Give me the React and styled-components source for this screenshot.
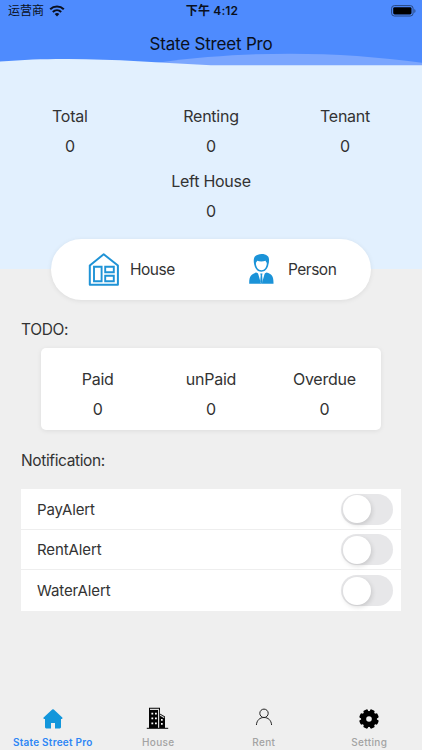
import React from 'react'
import { useState } from 'react'
import styled, { createGlobalStyle } from 'styled-components'

const GlobalStyle = createGlobalStyle`
  * {
    box-sizing: border-box;
  }
  body {
    margin: 0;
    background-color: #efefef;
    font-family: Inter, 'Noto Sans CJK SC', sans-serif;
    color: #333;
  }
`

// Page

const Page = styled.div`
  display: flex;
  flex-direction: column;
  width: 422px;
  height: 750px;
  overflow: hidden;
  background-color: #efefef;
`

// Header

const Header = styled.header`
  display: flex;
  flex-direction: column;
  height: 66px;
  background-color: #4e8bfe;
  color: #0a1020;
  position: relative;
`
const StatusBar = styled.div`
  display: grid;
  grid-template-columns: 1fr auto 1fr;
  align-items: center;
  height: 22px;
  padding: 0 6px 0 8px;
  font-size: 12px;
  line-height: 22px;
`
const Carrier = styled.div`
  display: flex;
  align-items: center;
  gap: 5px;
`
const Time = styled.div`
  font-weight: 600;
  letter-spacing: 0.15px;
  white-space: nowrap;
`
const BatteryIcon = styled.svg`
  justify-self: end;
`
const Title = styled.h1`
  margin: 0;
  font-size: 17px;
  font-weight: 400;
  letter-spacing: -0.2px;
  line-height: 45px;
  text-align: center;
  z-index: 1;
`
const Wave = styled.svg`
  position: absolute;
  left: 0;
  bottom: 0;
`

// Overview

const Overview = styled.section`
  height: 202.5px;
  padding: 35px 52px 0;
  background-color: #e2f0fe;
`
const StatRow = styled.div`
  display: grid;
  grid-template-columns: repeat(3, 1fr);
  justify-items: center;
  & > :first-child {
    justify-self: start;
  }
  & > :last-child {
    justify-self: end;
  }
`
const LeftRow = styled.div`
  display: flex;
  justify-content: center;
  margin-top: 5px;
`
const StatBox = styled.div`
  display: flex;
  flex-direction: column;
  align-items: center;
  font-size: 16px;
  letter-spacing: -0.25px;
  line-height: 30px;
`

const Pill = styled.div`
  display: flex;
  flex-shrink: 0;
  width: 320px;
  height: 61px;
  margin: -30px auto 0;
  padding: 1px 0 0 35px;
  background-color: white;
  border-radius: 31px;
  box-shadow: 0 1px 5px rgba(0, 0, 0, 0.08);
`
const PillItem = styled.div`
  display: flex;
  align-items: center;
  flex-shrink: 0;
  gap: 9px;
  width: 158px;
  font-size: 15.5px;
  letter-spacing: -0.5px;
`

// Todo

const SectionTitle = styled.h2`
  margin: ${(props) => props.$top}px 0 0 21px;
  font-size: 15.5px;
  font-weight: 400;
  letter-spacing: -0.38px;
  line-height: 20px;
`
const TodoCard = styled.div`
  display: grid;
  grid-template-columns: repeat(3, 1fr);
  flex-shrink: 0;
  width: 340px;
  height: 82px;
  margin: 8.8px auto 0;
  padding-top: 16px;
  background-color: white;
  border-radius: 5px;
  box-shadow: 0 1px 5px rgba(0, 0, 0, 0.08);
`

// Notification

const AlertList = styled.div`
  width: 380px;
  margin: 18.4px auto 0;
  background-color: white;
`
const AlertRow = styled.div`
  display: flex;
  align-items: center;
  justify-content: space-between;
  height: 40.5px;
  padding: 1px 8px 0 16px;
  border-bottom: 1px solid #eee;
  font-size: 15px;
  letter-spacing: -0.1px;
  &:last-child {
    border-bottom: none;
  }
`
const Switch = styled.button`
  display: flex;
  align-items: center;
  justify-content: ${(props) => (props.$on ? 'flex-end' : 'flex-start')};
  width: 52px;
  height: 31px;
  padding: 0 1.5px;
  border: none;
  border-radius: 16px;
  background-color: ${(props) => (props.$on ? '#34c759' : '#e7e7e9')};
  cursor: pointer;
`
const Knob = styled.span`
  width: 28px;
  height: 28px;
  border-radius: 50%;
  background-color: white;
  box-shadow: 1px 2px 5px rgba(0, 0, 0, 0.14);
`

// Tabs

const TabBar = styled.nav`
  display: grid;
  grid-template-columns: repeat(4, 1fr);
  margin-top: auto;
  height: 48px;
`
const Tab = styled.div`
  display: flex;
  flex-direction: column;
  align-items: center;
  color: ${(props) => (props.$active ? '#2d86f5' : '#a3a3a3')};
  font-size: 10px;
  font-weight: ${(props) => (props.$active ? 600 : 500)};
  letter-spacing: ${(props) => (props.$active ? '0.25px' : '0.35px')};
  line-height: 14px;
  gap: 4px;
  padding-top: 5px;
`

const WifiIcon = () => (
  <svg width="16" height="12" viewBox="0 0 16 12" fill="none" stroke="#0a1020">
    <path d="M1.2 4.2C5 .6 11 .6 14.8 4.2" strokeWidth="2.1" />
    <path d="M3.8 7C6.2 4.8 9.8 4.8 12.2 7" strokeWidth="2" />
    <path d="M8 11.4 5.7 9c1.3-1.2 3.3-1.2 4.6 0z" fill="#0a1020" stroke="none" />
  </svg>
)

const HousePlanIcon = () => (
  <svg width="35" height="35" viewBox="0 0 35 35" fill="none" stroke="#1f93d6">
    <path d="M3.8 13.5 17.7 2.3 31.9 13.5V32.8H3.8z" strokeWidth="2" strokeLinejoin="round" />
    <path d="M8 14.8h7.6v14.4H8zM19.2 14.8h8.6v5.4h-8.6zM19.2 23.8h8.6v5.4h-8.6z" strokeWidth="1.9" />
  </svg>
)

const ManIcon = () => (
  <svg width="35" height="35" viewBox="0 0 35 35" fill="#1b93d8">
    <path d="M10.2 12.5C8.9 6.5 10.4 3.2 14 2.7c3-1.4 11-.9 11 4.6 0 1.8.1 3.4-.6 5.2-.8 4.6-3.5 7.2-7.1 7.2s-6.1-2.6-7.1-7.2z" />
    <path d="M11.9 10.8c.7-.5 1-1.2 1.2-2 2.5.8 6.1.8 8.5-.1.2.9.6 1.6 1.2 2.1 0 4.6-2.2 7.4-5.4 7.4s-5.5-2.8-5.5-7.4z" fill="white" />
    <path d="M12.2 20.6 17.4 23l5.2-2.4c4.8 1.4 6.9 3 6.9 10.2v1H5.2v-1c0-7.200 2.300-8.800 7-10.200z" />
    <path d="M13.8 20.4 16.9 31.2 17.9 31.2 21 20.4 17.4 21.4z" fill="white" />
    <path d="M16.3 21.5h2.2l-.4 1.9.5 6-1.2 2-1.2-2 .5-6z" />
  </svg>
)

const HomeIcon = () => (
  <svg width="24" height="24" viewBox="0 0 24 24" fill="#1296db">
    <path d="M11.2 2.5a1.2 1.2 0 0 1 1.6 0L21.3 10.6c.5.5.2 1.3-.5 1.3H20v8.2c0 .8-.5 1.3-1.2 1.3H14v-5.3h-4v5.3H5.2c-.7 0-1.200-.5-1.200-1.300v-8.200h-.9c-.7 0-1-.8-.5-1.300z" />
  </svg>
)

const BuildingIcon = () => (
  <svg width="24" height="24" viewBox="0 0 24 24">
    <path d="M3 .8h11V21H3zM13 6l6 3.5V21h-6z" fill="#050505" />
    <path d="M4 1.8h9V3H4zM12 3h1.2v18H12zM14 7.6l4.2 2.5v1.1L14 8.7z" fill="#ddd" />
    <path d="M5.4 5.8h1.8v1.8H5.4zM9 5.8h1.8v1.8H9zM5.4 10.5h1.8v1.8H5.4zM9 10.5h1.8v1.8H9zM5.4 15.5h1.8v1.8H5.4zM9 15.5h1.8v1.8H9zM15 12h1.7v1.7H15zM15 16h1.7v1.7H15z" fill="white" />
    <path d="M.8 21.3h21.4" stroke="#050505" strokeWidth="1" />
  </svg>
)

const PersonIcon = () => (
  <svg width="24" height="24" viewBox="0 0 24 24" fill="none" stroke="#222" strokeWidth="1">
    <circle cx="12" cy="6.3" r="4.2" />
    <path d="M4.4 18c.4-4.8 3.4-7.5 7.6-7.5s7.2 2.7 7.6 7.5" />
  </svg>
)

const GearIcon = () => (
  <svg width="24" height="24" viewBox="0 0 24 24">
    <circle cx="12" cy="12" r="8" />
    {[22.5, 67.5, 112.5, 157.5, 202.5, 247.5, 292.5, 337.5].map((angle) => (
      <rect key={angle} x="9.6" y="2.2" width="4.8" height="6" rx="1.2" transform={`rotate(${angle} 12 12)`} />
    ))}
    <circle cx="12" cy="12" r="2.8" fill="#efefef" />
  </svg>
)

const Stat = ({ label, value }) => (
  <StatBox>
    <span>{label}</span>
    <span>{value}</span>
  </StatBox>
)

const tabs = [
  { name: 'State Street Pro', icon: <HomeIcon /> },
  { name: 'House', icon: <BuildingIcon /> },
  { name: 'Rent', icon: <PersonIcon /> },
  { name: 'Setting', icon: <GearIcon /> },
]

export default function App() {
  const [alerts, setAlerts] = useState({
    PayAlert: false,
    RentAlert: false,
    WaterAlert: false,
  })

  const toggleHandler = (name) => {
    setAlerts({ ...alerts, [name]: !alerts[name] })
  }

  return (
    <Page>
      <GlobalStyle />
      <Header>
        <Wave width="422" height="14" viewBox="0 52 422 14">
          <path d="M155 63C205 56 250 53.7 290 53.7C335 53.7 380 57 422 62.7V66H155z" fill="#7ba6fe" />
          <path d="M0 61.6C25 59.5 45 58.8 68 58.9C115 59 160 62.5 211 65.3H422V66H0z" fill="#e2f0fe" />
        </Wave>
        <StatusBar>
          <Carrier>
            运营商 <WifiIcon />
          </Carrier>
          <Time>下午 4:12</Time>
          <BatteryIcon width="25" height="12" viewBox="0 0 25 12">
            <rect x=".6" y=".6" width="21.5" height="10.4" rx="2.8" fill="none" stroke="#28477f" />
            <rect x="2.2" y="2.2" width="18.3" height="7.2" rx="1.4" />
            <path d="M23.4 4v4c1.4-.5 1.4-3.5 0-4z" fill="#28477f" />
          </BatteryIcon>
        </StatusBar>
        <Title>State Street Pro</Title>
      </Header>

      <Overview>
        <StatRow>
          <Stat label="Total" value={0} />
          <Stat label="Renting" value={0} />
          <Stat label="Tenant" value={0} />
        </StatRow>
        <LeftRow>
          <Stat label="Left House" value={0} />
        </LeftRow>
      </Overview>

      <Pill>
        <PillItem>
          <HousePlanIcon />
          House
        </PillItem>
        <PillItem>
          <ManIcon />
          Person
        </PillItem>
      </Pill>

      <SectionTitle $top={20}>TODO:</SectionTitle>
      <TodoCard>
        <Stat label="Paid" value={0} />
        <Stat label="unPaid" value={0} />
        <Stat label="Overdue" value={0} />
      </TodoCard>

      <SectionTitle $top={20.5}>Notification:</SectionTitle>
      <AlertList>
        {Object.keys(alerts).map((name) => (
          <AlertRow key={name}>
            {name}
            <Switch $on={alerts[name]} aria-label={name} onClick={() => toggleHandler(name)}>
              <Knob />
            </Switch>
          </AlertRow>
        ))}
      </AlertList>

      <TabBar>
        {tabs.map((tab, index) => (
          <Tab key={tab.name} $active={index === 0}>
            {tab.icon}
            {tab.name}
          </Tab>
        ))}
      </TabBar>
    </Page>
  )
}
